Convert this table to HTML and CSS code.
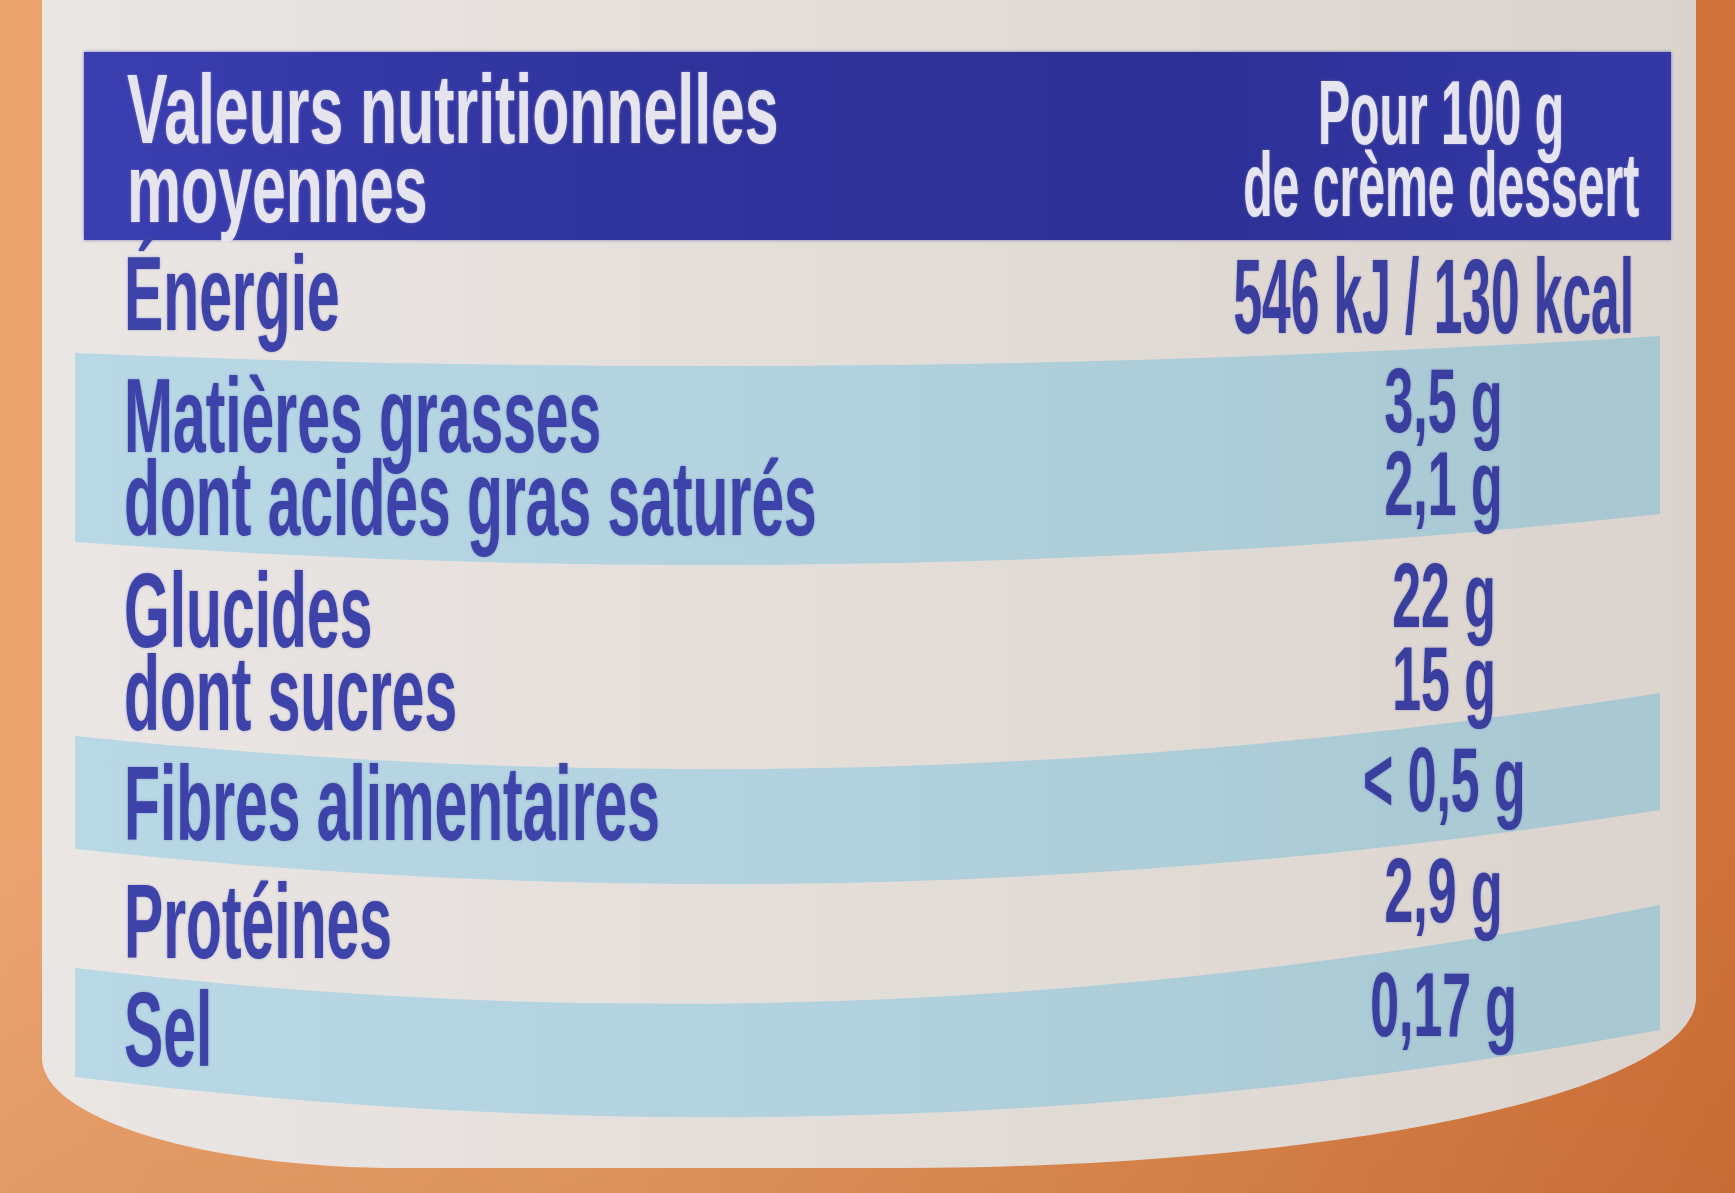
FILE: index.html
```html
<!DOCTYPE html>
<html lang="fr">
<head>
<meta charset="utf-8">
<title>Valeurs nutritionnelles moyennes</title>
<link rel="stylesheet" href="styles.css">
</head>
<body>
<main class="label">
  <header class="head">
    <div class="head-left">
      <div class="head-txt"><span class="ln">Valeurs nutritionnelles</span><span class="ln">moyennes</span></div>
    </div>
    <div class="head-right">
      <span class="ln">Pour 100 g</span>
      <span class="ln">de crème dessert</span>
    </div>
  </header>
  <section class="tbody">
    <div class="bands" aria-hidden="true"></div>
    <div class="rows">
      <div class="row r-e">
        <div class="lab"><span class="t">Énergie</span></div>
        <div class="val val-kcal"><span class="ln">546 kJ / 130 kcal</span></div>
      </div>
      <div class="row r-f">
        <div class="lab"><span class="t"><span class="ln">Matières grasses</span><span class="ln">dont acides gras saturés</span></span></div>
        <div class="val"><span class="ln">3,5 g</span><span class="ln">2,1 g</span></div>
      </div>
      <div class="row r-g">
        <div class="lab"><span class="t"><span class="ln">Glucides</span><span class="ln">dont sucres</span></span></div>
        <div class="val"><span class="ln">22 g</span><span class="ln">15 g</span></div>
      </div>
      <div class="row r-fi">
        <div class="lab"><span class="t">Fibres alimentaires</span></div>
        <div class="val"><span class="ln">&lt; 0,5 g</span></div>
      </div>
      <div class="row r-p">
        <div class="lab"><span class="t">Protéines</span></div>
        <div class="val"><span class="ln">2,9 g</span></div>
      </div>
      <div class="row r-s">
        <div class="lab"><span class="t">Sel</span></div>
        <div class="val"><span class="ln">0,17 g</span></div>
      </div>
    </div>
  </section>
</main>
</body>
</html>
```
FILE: styles.css
```css
html, body {
  margin: 0;
  padding: 0;
}

body {
  width: 1735px;
  height: 1193px;
  overflow: hidden;
  font-family: "Liberation Sans", Arial, sans-serif;
  background:
    linear-gradient(180deg, rgba(0, 0, 0, 0) 70%, rgba(110, 40, 0, 0.08) 100%),
    linear-gradient(90deg, #eca46f 0%, #e59b63 35%, #da864c 70%, #cf7139 100%);
}

.label {
  box-sizing: border-box;
  margin-left: 42px;
  width: 1654px;
  height: 1168px;
  padding-top: 52px;
  overflow: hidden;
  background: linear-gradient(90deg, #eae6e4 0%, #e4ded9 45%, #dbd4ce 100%);
  border-radius: 0 0 800px 360px / 0 0 170px 110px;
}

/* ---------- header ---------- */
.head {
  margin: 0 25px 0 42px;
  height: 188px;
  display: grid;
  grid-template-columns: minmax(0, 1fr) 460px;
  background: linear-gradient(90deg, #3a3eb0 0%, #2f339c 35%, #2c3096 70%, #3438a5 100%);
  box-shadow: 0 0 3px rgba(45, 49, 150, 0.6);
  color: #e6e4ee;
  font-weight: 700;
  text-shadow: 0 0 3px rgba(230, 228, 240, 0.45);
  white-space: nowrap;
}

.head-left {
  padding: 18px 0 0 43px;
  font-size: 98px;
  line-height: 79px;
}

.head-txt {
  transform: scaleX(0.62);
  transform-origin: left top;
}

.ln {
  display: block;
}

.head-right {
  padding-top: 25px;
  font-size: 90px;
  line-height: 72px;
  display: flex;
  flex-direction: column;
  align-items: center;
}

.head-right .ln {
  transform: scaleX(0.535);
}

/* ---------- body ---------- */
.tbody {
  display: grid;
  margin: 0 36px 0 33px;
  height: 928px;
}

.bands,
.rows {
  grid-area: 1 / 1;
  min-width: 0;
}

.bands {
  background: linear-gradient(90deg, #b8d8e5 0%, #b0d1dd 50%, #a8c7d1 100%);
  clip-path: path('M0,113 Q792.5,146 1585,96 L1585,274 Q792.5,359.5 0,302 Z M0,496 Q792.5,579.6 1585,453 L1585,570 Q792.5,695.1 0,609 Z M0,728 Q792.5,823.3 1585,665 L1585,790 Q792.5,936.4 0,837 Z');
}

.row {
  display: grid;
  grid-template-columns: minmax(0, 1fr) 420px;
  padding: 0 6px 0 49px;
  box-sizing: border-box;
}

.lab {
  min-width: 0;
  font-size: 105px;
  line-height: 83px;
  font-weight: 700;
  color: #3d43a8;
  white-space: nowrap;
  text-shadow: 0 0 3px rgba(61, 67, 168, 0.45);
}

.lab .t {
  display: block;
  transform: scaleX(0.56);
  transform-origin: left center;
}

.val {
  min-width: 0;
  font-size: 90px;
  line-height: 83px;
  font-weight: 700;
  color: #3a3f9f;
  white-space: nowrap;
  display: flex;
  flex-direction: column;
  align-items: center;
  text-shadow: 0 0 3px rgba(58, 63, 159, 0.45);
}

.val .ln {
  transform: scaleX(0.575);
}

.val-kcal {
  font-size: 105px;
  padding-right: 20px;
}

.val-kcal .ln {
  transform: scaleX(0.49);
}

.r-e { height: 120px; }
.r-e .lab { padding-top: 12px; }
.r-e .val { padding-top: 15px; }

.r-f { height: 195px; }
.r-f .lab { padding-top: 14px; }

.r-g { height: 184px; }
.r-g .lab { padding-top: 14px; }

.r-fi { height: 111px; }
.r-fi .lab { padding-top: 23px; }

.r-p { height: 114px; }
.r-p .lab { padding-top: 30px; }

.r-s .lab { padding-top: 24px; }
```
